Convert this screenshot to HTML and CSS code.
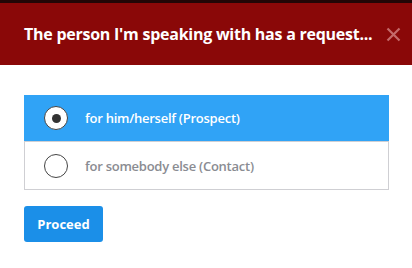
FILE: index.html
```html
<!DOCTYPE html>
<html>
<head>
<meta charset="utf-8">
<link rel="stylesheet" href="styles.css">
</head>
<body>
<div class="topstrip"></div>
<header class="header">
  <h1 class="title">The person I'm speaking with has a request...</h1>
  <span class="close" aria-label="close">
    <svg width="15" height="15" viewBox="0 0 15 15"><path d="M1.5 1.5 L13.5 13.5 M13.5 1.5 L1.5 13.5" stroke="#c46a6a" stroke-width="2.2" fill="none"/></svg>
  </span>
</header>
<main class="content">
  <div class="options">
    <label class="option selected">
      <span class="radio"><span class="dot"></span></span>
      <span class="label">for him/herself (Prospect)</span>
    </label>
    <label class="option">
      <span class="radio"></span>
      <span class="label">for somebody else (Contact)</span>
    </label>
  </div>
  <button class="proceed">Proceed</button>
</main>
</body>
</html>
```

FILE: styles.css
```css
* { box-sizing: border-box; }
html, body { margin: 0; padding: 0; background: #fff; }
body { font-family: "Open Sans", "Noto Sans", sans-serif; width: 412px; height: 268px; overflow: hidden; }
.topstrip { height: 3px; background: #220606; }
.header {
  height: 62px;
  background: #8a0808;
  display: flex;
  align-items: center;
  justify-content: space-between;
  padding: 0 11px 0 24px;
}
.title {
  margin: 0;
  color: #fff;
  font-size: 16px;
  font-weight: 700;
  letter-spacing: -0.25px;
}
.close { display: flex; align-items: center; }
.content { padding: 30px 23px 0 24px; }
.options {
  border: 1px solid #cfcfd3;
  border-top: none;
  display: flex;
  flex-direction: column;
}
.option {
  height: 47px;
  display: flex;
  align-items: center;
  padding-left: 19px;
  color: #8a8c92;
  font-size: 13px;
  font-weight: 600;
  letter-spacing: -0.25px;
}
.option.selected {
  background: #30a3f6;
  color: #fff;
  margin: 0 -1px;
  padding-left: 20px;
  border-bottom: 1px solid #cfcfd3;
}
.radio {
  width: 24px;
  height: 24px;
  border-radius: 50%;
  border: 1.5px solid #444;
  background: #fff;
  display: flex;
  align-items: center;
  justify-content: center;
  margin-right: 17px;
}
.dot { width: 9px; height: 9px; border-radius: 50%; background: #333; }
.proceed {
  margin-top: 16px;
  width: 79px;
  height: 36px;
  border: none;
  border-radius: 3px;
  background: #1b8fe8;
  color: #fff;
  font-family: inherit;
  font-size: 13px;
  font-weight: 700;
  padding: 0;
}
```
